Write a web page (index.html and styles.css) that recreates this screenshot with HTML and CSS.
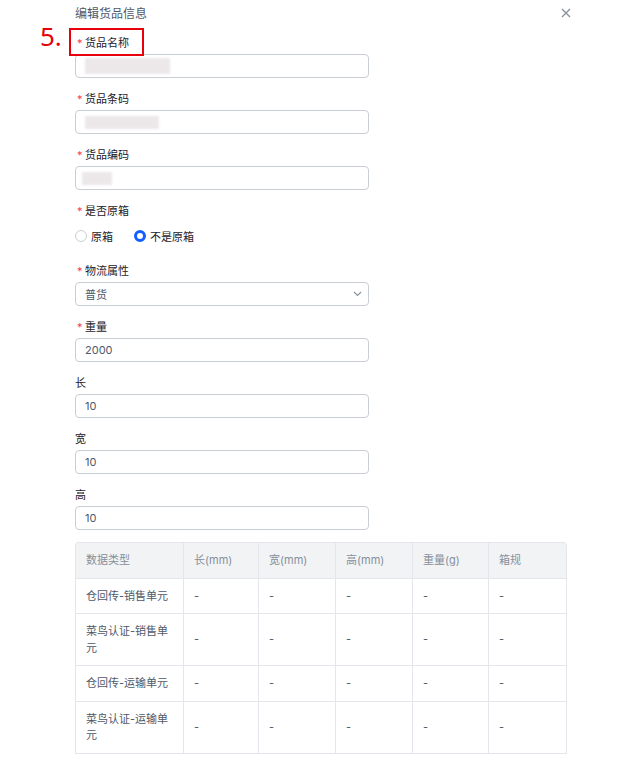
FILE: index.html
```html
<!DOCTYPE html>
<html lang="zh">
<head>
<meta charset="utf-8">
<link rel="stylesheet" href="styles.css">
</head>
<body>
<div class="drawer">
  <div class="header">
    <span class="title">编辑货品信息</span>
    <svg class="close" width="10" height="10" viewBox="0 0 10 10"><path d="M1 1L9 9M9 1L1 9" stroke="#86909c" stroke-width="1.3" fill="none"/></svg>
  </div>
  <form class="form">
    <div class="field">
      <div class="label"><span class="req">*</span>货品名称</div>
      <div class="input"><span class="blur w85"></span></div>
    </div>
    <div class="field">
      <div class="label"><span class="req">*</span>货品条码</div>
      <div class="input"><span class="blur w74 short"></span></div>
    </div>
    <div class="field">
      <div class="label"><span class="req">*</span>货品编码</div>
      <div class="input"><span class="blur w30 short left"></span></div>
    </div>
    <div class="field">
      <div class="label"><span class="req">*</span>是否原箱</div>
      <div class="radios">
        <label class="radio"><span class="dot"></span>原箱</label>
        <label class="radio"><span class="dot on"></span>不是原箱</label>
      </div>
    </div>
    <div class="field">
      <div class="label"><span class="req">*</span>物流属性</div>
      <div class="input select"><span class="val">普货</span>
        <svg width="9" height="6" viewBox="0 0 9 6"><path d="M1 1L4.5 4.5L8 1" stroke="#86909c" stroke-width="1.1" fill="none"/></svg>
      </div>
    </div>
    <div class="field">
      <div class="label"><span class="req">*</span>重量</div>
      <div class="input"><span class="val">2000</span></div>
    </div>
    <div class="field">
      <div class="label">长</div>
      <div class="input"><span class="val">10</span></div>
    </div>
    <div class="field">
      <div class="label">宽</div>
      <div class="input"><span class="val">10</span></div>
    </div>
    <div class="field">
      <div class="label">高</div>
      <div class="input"><span class="val">10</span></div>
    </div>
  </form>
  <table class="table">
    <colgroup>
      <col class="c1"><col class="c2"><col class="c3"><col class="c4"><col class="c5"><col class="c6">
    </colgroup>
    <thead>
      <tr><th>数据类型</th><th>长(mm)</th><th>宽(mm)</th><th>高(mm)</th><th>重量(g)</th><th>箱规</th></tr>
    </thead>
    <tbody>
      <tr><td>仓回传-销售单元</td><td>-</td><td>-</td><td>-</td><td>-</td><td>-</td></tr>
      <tr><td>菜鸟认证-销售单元</td><td>-</td><td>-</td><td>-</td><td>-</td><td>-</td></tr>
      <tr><td>仓回传-运输单元</td><td>-</td><td>-</td><td>-</td><td>-</td><td>-</td></tr>
      <tr><td>菜鸟认证-运输单元</td><td>-</td><td>-</td><td>-</td><td>-</td><td>-</td></tr>
    </tbody>
  </table>
  <span class="step">5.</span>
  <span class="highlight"></span>
</div>
</body>
</html>
```
FILE: styles.css
```css
* { box-sizing: border-box; }
html, body { margin: 0; padding: 0; background: #fff; }
body {
  font-family: Inter, "Noto Sans CJK SC", sans-serif;
  font-size: 11px;
  color: #1d2129;
}
.drawer {
  position: relative;
  width: 622px;
  padding: 6px 0 0 75px;
}
.header {
  width: 496px;
  height: 16px;
  display: flex;
  align-items: center;
  justify-content: space-between;
}
.title {
  font-size: 12px;
  line-height: 16px;
  color: #4e5969;
}
.close { margin-top: -2px; }
.form {
  margin: 13px 0 0 0;
  width: 294px;
}
.field { margin-bottom: 13px; }
.field:last-child { margin-bottom: 12px; }
.label {
  height: 16px;
  line-height: 16px;
  font-size: 11px;
  color: #1d2129;
  margin-bottom: 3px;
  display: flex;
  align-items: center;
}
.req {
  color: #f53f3f;
  width: 10px;
  padding-left: 2px;
  font-size: 11px;
}
.input {
  height: 24px;
  border: 1px solid #c9cdd4;
  border-radius: 4px;
  display: flex;
  align-items: center;
  padding: 0 9px;
  background: #fff;
}
.val { color: #4e5969; font-size: 11px; }
.select { justify-content: space-between; }
.select svg { margin-right: -3px; }
.blur {
  display: block;
  height: 16px;
  background: #ece8ea;
  filter: blur(1px);
}
.w85 { width: 85px; }
.w74 { width: 74px; }
.w30 { width: 30px; }
.short { height: 13px; }
.left { margin-left: -3px; }
.radios {
  height: 28px;
  display: flex;
  align-items: center;
  gap: 21px;
}
.radio {
  display: flex;
  align-items: center;
  gap: 4px;
  color: #1d2129;
  font-size: 11px;
}
.dot {
  width: 12px;
  height: 12px;
  border-radius: 50%;
  border: 1px solid #c9cdd4;
  background: #fff;
}
.dot.on { border: 3.5px solid #165dff; }
.table {
  width: 491px;
  border-collapse: separate;
  border-spacing: 0;
  table-layout: fixed;
  border-top: 1px solid #e5e6eb;
  border-left: 1px solid #e5e6eb;
  border-radius: 4px 4px 0 0;
  font-size: 11px;
}
.c1 { width: 108px; }
.c2 { width: 75px; }
.c3 { width: 77px; }
.c4 { width: 77px; }
.c5 { width: 76px; }
.c6 { width: 78px; }
.table th, .table td {
  border-right: 1px solid #e5e6eb;
  border-bottom: 1px solid #e5e6eb;
  padding: 9px 10px;
  line-height: 16.5px;
  text-align: left;
  font-weight: normal;
}
.table th {
  background: #f2f3f5;
  color: #86909c;
  height: 35px;
}
.table th:first-child { border-top-left-radius: 4px; }
.table th:last-child { border-top-right-radius: 4px; }
.table td { color: #4e5969; }
.step {
  position: absolute;
  left: 40px;
  top: 22px;
  font-size: 26px;
  line-height: 28px;
  color: #e8000b;
  font-family: "Noto Sans", sans-serif;
}
.highlight {
  position: absolute;
  left: 69px;
  top: 28px;
  width: 75px;
  height: 28px;
  border: 2px solid #e8000b;
}
```
